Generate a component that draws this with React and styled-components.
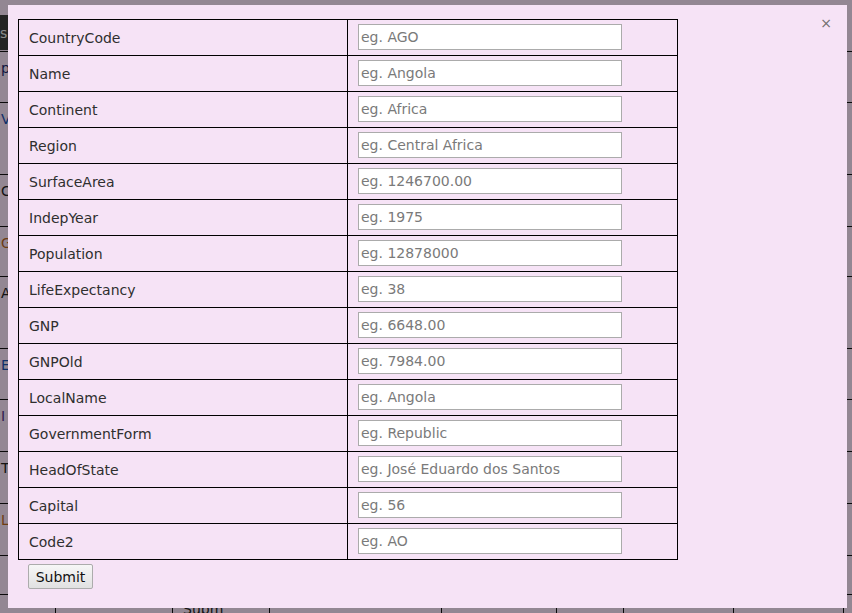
import React from "react";
import styled, { createGlobalStyle } from "styled-components";

const Global = createGlobalStyle`
  html, body { margin: 0; padding: 0; background: #f5e1f5; overflow: hidden; }
  body { font-family: "DejaVu Sans", Verdana, sans-serif; }
`;

const Page = styled.div`
  width: 852px;
  height: 613px;
  overflow: hidden;
`;

const TopBar = styled.div`
  height: 12px;
`;

const BgGrid = styled.div`
  display: grid;
  grid-template-columns: 56px 117px 97px 172px 115px 67px 110px 110px 40px;
  width: 900px;
`;

const BgCell = styled.div`
  box-sizing: border-box;
  height: ${(p) => p.$h}px;
  border-right: 1px solid #111;
  border-bottom: 1px solid #111;
  padding: ${(p) => (p.$tag ? "3px 0 0 0" : p.$pad ? "6px 0 0 10px" : "8px 0 0 1px")};
  font-size: 14px;
  color: ${(p) => p.$color || "#222"};
  overflow: hidden;
  white-space: nowrap;
`;

const DarkTag = styled.div`
  background: #3c3c3c;
  color: #e6e6e6;
  height: 35px;
  width: 60px;
  display: flex;
  align-items: center;
  font-size: 14px;
`;

const Overlay = styled.div`
  position: fixed;
  inset: 0;
  background: rgba(0, 0, 0, 0.4);
`;

const Modal = styled.div`
  position: fixed;
  left: 8px;
  top: 5px;
  width: 839px;
  height: 603px;
  box-sizing: border-box;
  background: #f6e3f6;
  padding: 14px 0 0 10px;
`;

const Close = styled.span`
  position: absolute;
  top: 9px;
  right: 15px;
  font-size: 14px;
  line-height: 18px;
  color: #6f6f6f;
  cursor: pointer;
`;

const FormGrid = styled.div`
  display: grid;
  grid-template-columns: 329px 329px;
  width: max-content;
  border: 1px solid #000;
`;

const Label = styled.div`
  box-sizing: border-box;
  height: ${(p) => (p.$last ? 35 : 36)}px;
  border-right: 1px solid #000;
  border-bottom: ${(p) => (p.$last ? "none" : "1px solid #000")};
  padding-left: 10px;
  display: flex;
  align-items: center;
  font-size: 14px;
  color: #2f2f2f;
`;

const Field = styled.div`
  box-sizing: border-box;
  height: ${(p) => (p.$last ? 35 : 36)}px;
  border-bottom: ${(p) => (p.$last ? "none" : "1px solid #000")};
  padding: 4px 0 0 10px;
`;

const Input = styled.input`
  display: block;
  box-sizing: border-box;
  width: 264px;
  height: 26px;
  margin: 0;
  border: 1px solid #ababab;
  padding: 0 2px;
  background: #fff;
  font-family: "DejaVu Sans", Verdana, sans-serif;
  font-size: 14px;
  color: #222;
  outline: none;
  &::placeholder { color: #7a7a7a; }
`;

const SubmitButton = styled.button`
  display: block;
  margin: 4px 0 0 10px;
  width: 65px;
  height: 25px;
  padding: 0;
  box-sizing: border-box;
  border: 1px solid #acacac;
  border-radius: 2px;
  background: linear-gradient(#f7f7f7, #e1e1e1);
  font-family: "DejaVu Sans", Verdana, sans-serif;
  font-size: 14px;
  color: #111;
`;

const fields = [
  ["CountryCode", "eg. AGO"],
  ["Name", "eg. Angola"],
  ["Continent", "eg. Africa"],
  ["Region", "eg. Central Africa"],
  ["SurfaceArea", "eg. 1246700.00"],
  ["IndepYear", "eg. 1975"],
  ["Population", "eg. 12878000"],
  ["LifeExpectancy", "eg. 38"],
  ["GNP", "eg. 6648.00"],
  ["GNPOld", "eg. 7984.00"],
  ["LocalName", "eg. Angola"],
  ["GovernmentForm", "eg. Republic"],
  ["HeadOfState", "eg. José Eduardo dos Santos"],
  ["Capital", "eg. 56"],
  ["Code2", "eg. AO"],
];

const bgRows = [
  { h: 40, first: "", color: "#222", tag: true },
  { h: 51, first: "pC", color: "#1b2a6b" },
  { h: 72, first: "V/", color: "#1a4fb0" },
  { h: 52, first: "C", color: "#222" },
  { h: 50, first: "G", color: "#b5651d" },
  { h: 72, first: "A", color: "#222" },
  { h: 51, first: "E", color: "#1a4fb0" },
  { h: 52, first: "I", color: "#553388" },
  { h: 52, first: "T", color: "#222" },
  { h: 52, first: "L", color: "#b5651d" },
  { h: 39, first: "", color: "#222" },
  { h: 60, first: "", color: "#222", submit: true },
];

export default function App() {
  return (
    <Page>
      <Global />
      <TopBar />
      <BgGrid>
        {bgRows.map((r, i) => (
          <React.Fragment key={i}>
            <BgCell $h={r.h} $color={r.color} $tag={r.tag}>
              {r.tag ? <DarkTag>s</DarkTag> : r.first}
            </BgCell>
            <BgCell $h={r.h} />
            <BgCell $h={r.h} $pad={r.submit}>{r.submit ? "Subm" : ""}</BgCell>
            <BgCell $h={r.h} />
            <BgCell $h={r.h} />
            <BgCell $h={r.h} />
            <BgCell $h={r.h} />
            <BgCell $h={r.h} />
            <BgCell $h={r.h} />
          </React.Fragment>
        ))}
      </BgGrid>
      <Overlay />
      <Modal>
        <Close>×</Close>
        <FormGrid>
          {fields.map(([name, ph], i) => {
            const last = i === fields.length - 1;
            return (
              <React.Fragment key={name}>
                <Label $last={last}>{name}</Label>
                <Field $last={last}>
                  <Input name={name} placeholder={ph} />
                </Field>
              </React.Fragment>
            );
          })}
        </FormGrid>
        <SubmitButton type="button">Submit</SubmitButton>
      </Modal>
    </Page>
  );
}
